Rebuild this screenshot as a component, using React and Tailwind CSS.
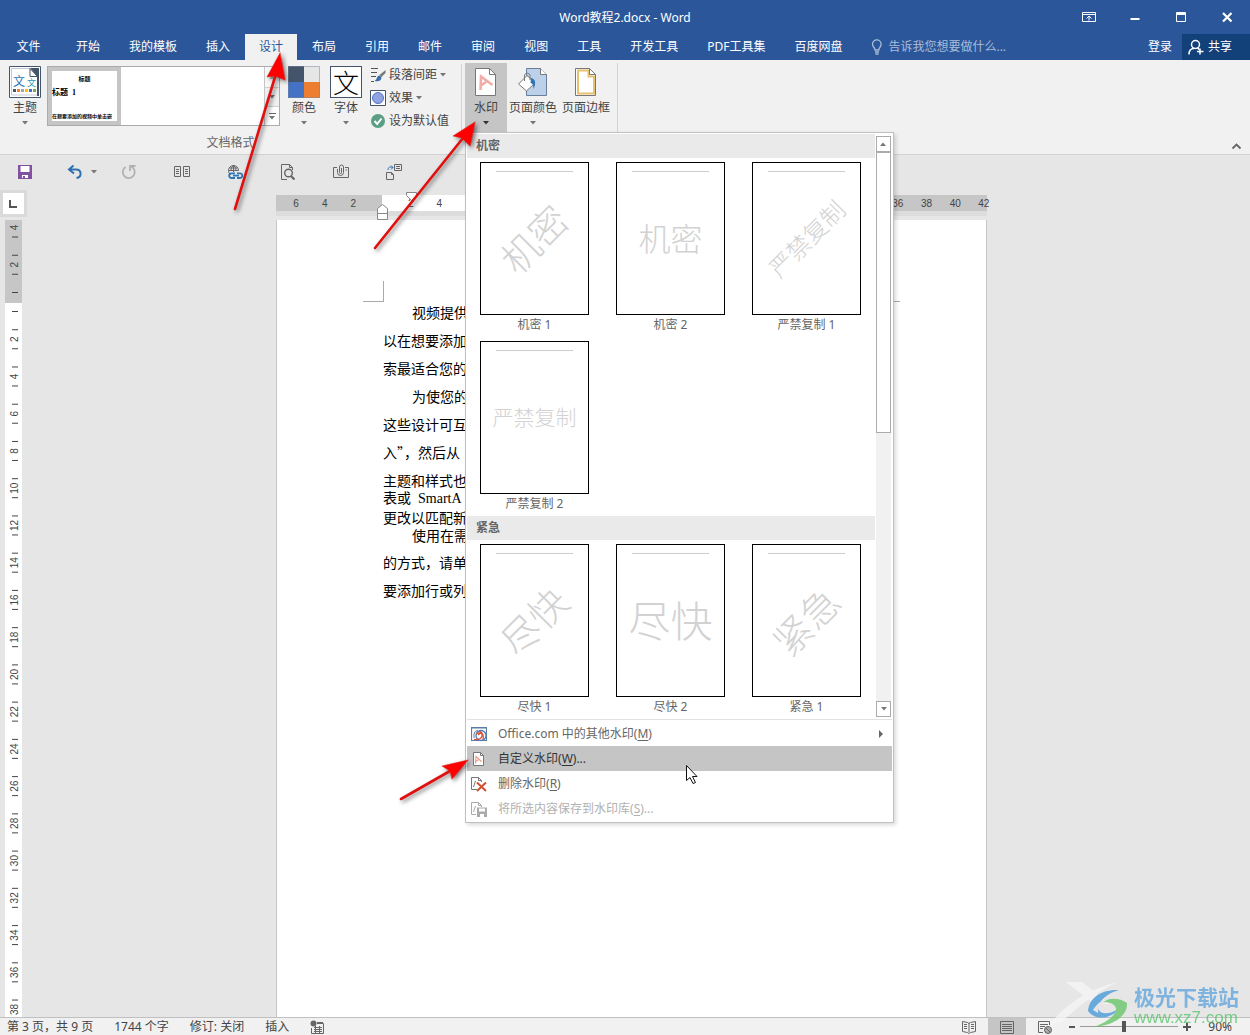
import { useState } from 'react';

const TABS = [
  '开始', '我的模板', '插入', '设计', '布局', '引用', '邮件',
  '审阅', '视图', '工具', '开发工具', 'PDF工具集', '百度网盘',
];

const WATERMARKS = [
  {
    title: '机密',
    items: [
      { name: '机密 1', text: '机密', look: '-rotate-45 text-[38px]' },
      { name: '机密 2', text: '机密', look: 'text-[32px]' },
      { name: '严禁复制 1', text: '严禁复制', look: '-rotate-45 text-[24px]' },
      { name: '严禁复制 2', text: '严禁复制', look: 'text-[21px]' },
    ],
  },
  {
    title: '紧急',
    items: [
      { name: '尽快 1', text: '尽快', look: '-rotate-45 text-[38px]' },
      { name: '尽快 2', text: '尽快', look: 'text-[42px]' },
      { name: '紧急 1', text: '紧急', look: '-rotate-45 text-[38px]' },
    ],
  },
];

const LINES = [
  { text: '视频提供', indent: true },
  { text: '以在想要添加' },
  { text: '索最适合您的' },
  { text: '为使您的', indent: true },
  { text: '这些设计可互' },
  { text: '入”，然后从' },
  { text: '主题和样式也' },
  { text: '表或  SmartA', tight: true, latin: true },
  { text: '更改以匹配新', tight: true },
  { text: '使用在需', indent: true, tight: true },
  { text: '的方式，请单' },
  { text: '要添加行或列' },
];

const range = (from, to) => Array.from({ length: (to - from) / 2 + 1 }, (_, i) => from + i * 2);

export default function App() {
  const [tab, setTab] = useState('设计');
  const [zoom, setZoom] = useState(90);

  return (
    <div className="relative flex flex-col h-screen overflow-hidden bg-[#e6e6e6] text-xs text-[#444] font-['Noto_Sans','Noto_Sans_CJK_SC',sans-serif]">
      <TitleBar />
      <TabBar active={tab} onChange={setTab} />
      <Ribbon />
      <QuickAccess />
      <Workspace />
      <StatusBar zoom={zoom} onZoom={setZoom} />
      <SiteMark />
      <Arrows />
    </div>
  );
}

function TitleBar() {
  return (
    <header className="relative flex items-center justify-center h-[34px] pt-[2px] shrink-0 bg-[#2b579a] text-white">
      <h1>Word教程2.docx - Word</h1>
      <div className="absolute right-0 top-0 flex h-[33px]">
        <WindowButton label="功能区显示选项">
          <path d="M1.500 3.500h13v9h-13zM1.500 5.500h13M8 11.500V7M5.500 9.500l2.500-2.500 2.500 2.500" />
        </WindowButton>
        <WindowButton label="最小化">
          <path d="M3.500 10h9" strokeWidth="2" />
        </WindowButton>
        <WindowButton label="最大化">
          <path d="M3.500 3.500h9v9h-9zM3.500 4.500h9M3.500 5.500h9" />
        </WindowButton>
        <WindowButton label="关闭">
          <path d="M4 4l8.500 8.500M12.500 4L4 12.500" strokeWidth="2.200" />
        </WindowButton>
      </div>
    </header>
  );
}

function WindowButton({ label, children }) {
  return (
    <button aria-label={label} className="w-[46px] flex items-center justify-center">
      <svg width="16" height="16" fill="none" stroke="#fff">{children}</svg>
    </button>
  );
}

function TabBar({ active, onChange }) {
  return (
    <nav className="flex gap-px h-[26px] shrink-0 bg-[#2b579a] text-white">
      <button className="w-[61px] pr-1">文件</button>
      {TABS.map((t) => (
        <button
          key={t}
          onClick={() => onChange(t)}
          className={t === active ? 'px-[14px] bg-[#f1f1f1] text-[#2b579a] whitespace-nowrap' : 'px-[14px] whitespace-nowrap'}
        >
          {t}
        </button>
      ))}
      <label className="flex items-center flex-1 min-w-0 pl-[14px] gap-[5px]">
        <svg width="12" height="16" fill="none" stroke="#a9bcdb" strokeWidth="1.300" className="shrink-0">
          <path d="M4 11C4 8.500 1.500 8 1.500 5.200a4.300 4.300 0 0 1 8.600 0C10.100 8 7.800 8.500 7.800 11zM4 13h4M4.500 15h3" />
        </svg>
        <input
          aria-label="操作说明搜索"
          placeholder="告诉我您想要做什么..."
          className="w-full bg-transparent outline-none placeholder:text-[#a9bcdb]"
        />
      </label>
      <button className="px-[9px] shrink-0">登录</button>
      <button className="flex items-center gap-1 w-[68px] pl-[6px] shrink-0 bg-[#124078]">
        <svg width="16" height="16" fill="none" stroke="#fff" strokeWidth="1.500">
          <circle cx="7.500" cy="5.500" r="4" />
          <path d="M1 15.500c0-4 2-6 5-6M9.500 8.500l1.500 2M12 9.500v6M9 12.500h6.500" />
        </svg>
        共享
      </button>
    </nav>
  );
}

function Caret({ dark }) {
  return (
    <svg width="6" height="4" fill={dark ? '#333' : '#777'} className="shrink-0">
      <path d="M0 0h6L3 3.500z" />
    </svg>
  );
}

function BigButton({ label, arrow, children }) {
  return (
    <button className="flex flex-col items-center shrink-0">
      {children}
      <span className="leading-5 whitespace-nowrap">{label}</span>
      {arrow && <span className="mt-[3px]"><Caret /></span>}
    </button>
  );
}

function Ribbon() {
  return (
    <section className="relative flex h-[95px] shrink-0 bg-[#f1f1f1] border-b border-[#d2d2d2]">
      <div className="flex flex-col w-[461px] shrink-0">
        <div className="flex items-start h-[73px] pt-[6px] pl-[9px]">
          <BigButton label="主题" arrow>
            <ThemeIcon />
          </BigButton>
          <div className="flex w-[233px] h-[60px] ml-[6px] bg-white border border-[#ababab]">
            <button className="flex flex-col items-start w-[73px] h-[58px] shrink-0 border-4 border-[#c5c5c5] bg-white text-black font-['Liberation_Serif','Noto_Sans_CJK_SC',serif]">
              <span className="w-full text-center text-[6px] leading-[16px] font-bold">标题</span>
              <span className="text-[8px] leading-3 font-bold">标题&nbsp; 1</span>
              <span className="mt-[14px] text-[5px] leading-[8px] whitespace-nowrap font-bold">在想要添加的视频中单击嵌</span>
            </button>
            <div className="flex flex-col w-[15px] ml-auto shrink-0 border-l border-[#c6c6c6]">
              <button aria-label="上一行" className="flex items-center justify-center h-5 bg-[#f1f1f1] rotate-180 opacity-50"><Caret /></button>
              <button aria-label="下一行" className="flex items-center justify-center h-5 bg-[#f1f1f1] border-y border-[#d2d2d2]"><Caret /></button>
              <button aria-label="其他" className="flex flex-col items-center justify-center gap-[2px] flex-1">
                <span className="w-[7px] h-px bg-[#666]" />
                <Caret />
              </button>
            </div>
          </div>
          <div className="flex gap-[10px] ml-2">
            <BigButton label="颜色" arrow>
              <svg width="32" height="32">
                <path d="M0 0h16v16H0z" fill="#44546a" />
                <path d="M16 0h16v16H16z" fill="#e7e6e6" />
                <path d="M0 16h16v16H0z" fill="#4472c4" />
                <path d="M16 16h16v16H16z" fill="#ed7d31" />
                <path d="M.5.5h31v31H.5z" fill="none" stroke="#7a8799" strokeOpacity=".5" />
              </svg>
            </BigButton>
            <BigButton label="字体" arrow>
              <span className="w-8 h-8 border border-[#44546a] bg-white text-black text-[26px] leading-[32px] font-light">文</span>
            </BigButton>
          </div>
          <div className="flex flex-col ml-2 -mt-[3px]">
            <SmallButton label="段落间距" arrow>
              <path d="M1 1.500h7M1 5.500h6M1 9.500h5M1 14.500h3" stroke="#555" />
              <path d="M15.500 3L9.500 8l2 2L15.500 6z" fill="#777" />
              <path d="M9.500 8.500c-3 0-2 4-5 5.500 4 1 7 0 7-4z" fill="#3a6ea5" />
            </SmallButton>
            <SmallButton label="效果" arrow>
              <path d="M.5.500h15v15H.5z" fill="#fff" stroke="#44546a" />
              <circle cx="8" cy="8" r="5.500" fill="#8fa3e0" stroke="#5873c4" />
            </SmallButton>
            <SmallButton label="设为默认值">
              <circle cx="8" cy="8" r="7" fill="#5a9e84" />
              <path d="M4.500 8l2.700 3L11.500 5.500" fill="none" stroke="#fff" strokeWidth="2" />
            </SmallButton>
          </div>
        </div>
        <span className="text-center leading-[22px] text-[#666]">文档格式</span>
      </div>
      <div className="w-px h-[68px] mt-1 bg-[#d2d2d2]" />
      <div className="flex mt-[3px] h-[69px] pl-[3px] pr-[7px] border-r border-[#d2d2d2]">
        <div className="relative">
          <button className="flex flex-col items-center w-[42px] h-[69px] pt-[3px] bg-[#c5c5c5]">
            <PageIcon>
              <path d="M10.500 24L11 10.500l11.500 8.500M11 19.500l7-5" fill="none" stroke="#f2aea6" strokeWidth="2.600" />
            </PageIcon>
            <span className="leading-5">水印</span>
            <span className="mt-[3px]"><Caret dark /></span>
          </button>
          <WatermarkMenu />
        </div>
        <div className="flex gap-[5px] ml-[2px] pt-[3px]">
          <BigButton label="页面颜色" arrow>
            <svg width="32" height="32" fill="none" stroke="#777">
              <path d="M9.500 2.500h14l6 6v21h-20z" fill="#bdd0ea" stroke="#6a7f9c" />
              <path d="M23.500 2.500v6h6" fill="#fff" />
              <path d="M1.500 18L10 9.500l8 7.500-8.500 8z" fill="#fff" />
              <path d="M7.500 15V9a3 3 0 0 1 5.500 0v5" />
              <path d="M14 12c5 1 5 6 2.500 11 0-4-1-6-3-6z" fill="#2e75b6" stroke="none" />
            </svg>
          </BigButton>
          <BigButton label="页面边框">
            <PageIcon><path d="M8 4.500h10.500v6H24v17H8z" fill="none" stroke="#e8c170" strokeWidth="2" /></PageIcon>
          </BigButton>
        </div>
      </div>
      <button aria-label="折叠功能区" className="self-end ml-auto mr-2 mb-1">
        <svg width="11" height="8" fill="none" stroke="#666" strokeWidth="1.800"><path d="M1.500 6.500l4-4 4 4" /></svg>
      </button>
    </section>
  );
}

function SmallButton({ label, arrow, children }) {
  return (
    <button className="flex items-center gap-[3px] h-[23px] whitespace-nowrap">
      <svg width="16" height="16" className="shrink-0">{children}</svg>
      {label}
      {arrow && <Caret />}
    </button>
  );
}

function ThemeIcon() {
  return (
    <span className="relative block w-8 h-8">
      <svg width="32" height="32">
        <path d="M.5.500h31v31H.5z" fill="#fff" stroke="#44546a" />
        <path d="M2.500 2.500h18l8 8v18.500h-26z" fill="#fff" stroke="#c3c9d2" />
        <path d="M21 2h9v28H28V10z" fill="#44546a" />
        <path d="M21 2.500v8h7.500z" fill="#fff" stroke="#44546a" />
        <path d="M4 23h3v3H4z" fill="#44546a" />
        <path d="M8 23h3v3H8z" fill="#ed7d31" />
        <path d="M12 23h3v3h-3z" fill="#a5a5a5" />
        <path d="M16 23h3v3h-3z" fill="#ffc000" />
        <path d="M20 23h3v3h-3z" fill="#4472c4" />
        <path d="M24 23h3v3h-3z" fill="#70ad47" />
      </svg>
      <span className="absolute left-1 top-[10px] text-[12px] leading-[12px] text-[#2e75b6]">文</span>
      <span className="absolute left-[18px] top-3 text-[9px] leading-[10px] text-[#2e9ab6]">文</span>
    </span>
  );
}

function PageIcon({ children }) {
  return (
    <svg width="32" height="32">
      <path d="M5.500 2.500h14l6 6v21h-20z" fill="#fff" stroke="#777" />
      {children}
      <path d="M19.500 2.500v6h6z" fill="#fff" stroke="#777" />
    </svg>
  );
}

function WatermarkMenu() {
  return (
    <div className="absolute left-0 top-full z-10 w-[429px] p-px bg-white border border-[#c0c0c0] shadow-[2px_2px_4px_rgba(0,0,0,0.15)]">
      <div className="flex justify-between h-[586px] pr-px border-b border-[#e1e1e1]">
        <div className="w-[408px]">
          {WATERMARKS.map((section) => (
            <section key={section.title}>
              <h2 className="h-6 pl-[9px] leading-[23px] bg-[#eaeaea] font-bold text-[#666]">{section.title}</h2>
              <div className="flex flex-wrap gap-x-[27px] gap-y-1 pt-1 pl-[13px]">
                {section.items.map((item) => (
                  <button key={item.name} className="flex flex-col items-center h-[175px]">
                    <span className="relative flex items-center justify-center w-[109px] h-[153px] border border-black bg-white overflow-hidden">
                      <span className="absolute inset-x-[15px] top-2 h-px bg-[#ccc]" />
                      <span className={`${item.look} font-light leading-none whitespace-nowrap text-[#d2d2d2]`}>{item.text}</span>
                    </span>
                    <span className="leading-[19px] text-[#666]">{item.name}</span>
                  </button>
                ))}
              </div>
            </section>
          ))}
        </div>
        <div className="flex flex-col w-[15px] my-[2px] bg-[#f1f1f1]">
          <button aria-label="向上滚动" className="flex items-center justify-center h-4 shrink-0 bg-white border border-[#ababab] rotate-180"><Caret /></button>
          <div className="h-[281px] bg-white border border-[#ababab]" />
          <button aria-label="向下滚动" className="flex items-center justify-center h-4 mt-auto shrink-0 bg-white border border-[#ababab]"><Caret /></button>
        </div>
      </div>
      <div className="pt-px">
        <MenuItem text="Office.com 中的其他水印" hotkey="M" arrow>
          <path d="M1 2h14M.5 1.500h15v13H.5z" fill="none" stroke="#5b7ca8" strokeWidth="1.200" />
          <path d="M3 12V8a4 4 0 0 1 4-3.500" fill="none" stroke="#5b7ca8" />
          <circle cx="10" cy="9.500" r="5" fill="#fff" stroke="#4a7cc0" strokeWidth="1.300" />
          <path d="M5 8c3-2 7-1 6 2s-4 4-8 3.500M8 5c3 1 5 4 4 9M7 9l4-3" fill="none" stroke="#d9503a" strokeWidth="1.300" />
        </MenuItem>
        <MenuItem text="自定义水印" hotkey="W" dots active>
          <path d="M2.500 1.500h7l3 3v10h-10z" fill="#fff" stroke="#777" />
          <path d="M9.500 1.500v3h3" fill="none" stroke="#777" />
          <path d="M4.500 12.500l.500-7 5.500 5M4.500 10.500L8 8.500" fill="none" stroke="#f09a8c" strokeWidth="1.200" />
        </MenuItem>
        <MenuItem text="删除水印" hotkey="R">
          <path d="M6 13.500H.500v-12h7l3 3V6M7.500 1.500v3h3M2.500 11l2-6" fill="none" stroke="#777" />
          <path d="M6 6.500l9 8.500M15 6.500L6 15" stroke="#cf5230" strokeWidth="2" />
        </MenuItem>
        <MenuItem text="将所选内容保存到水印库" hotkey="S" dots disabled>
          <path d="M5 13.500H.500v-12h7l3 3V6M7.500 1.500v3h3M2.500 11l2-6" fill="none" stroke="#aaa" />
          <path d="M6 6.500h10V16H6z" fill="#aaa" />
          <path d="M8 7.500h6v3H8zM9 13h4v3H9z" fill="#fff" />
        </MenuItem>
      </div>
    </div>
  );
}

function MenuItem({ text, hotkey, arrow, dots, active, disabled, children }) {
  let tone = 'text-[#666]';
  if (active) tone = 'bg-[#c5c5c5] text-[#333]';
  if (disabled) tone = 'text-[#b1b1b1]';
  return (
    <button disabled={disabled} className={`${tone} flex items-center w-full h-[25px] pl-1 pr-[9px] text-left`}>
      <svg width="16" height="16" className="mr-[11px] shrink-0">{children}</svg>
      <span>{text}(<u className="underline-offset-2">{hotkey}</u>){dots && '...'}</span>
      {arrow && <svg width="4" height="8" fill="#666" className="ml-auto"><path d="M0 0l4 4-4 4z" /></svg>}
    </button>
  );
}

function QuickAccess() {
  return (
    <div className="flex h-[35px] pb-[2px] shrink-0">
      <button aria-label="保存" className="flex items-center justify-center w-[50px]">
        <svg width="16" height="16">
          <path d="M1 1h14v14H1z" fill="#8052a0" />
          <path d="M3.500 2h9v6h-9zM5 11h6v3H5z" fill="#fff" />
          <path d="M6 12h2v2H6z" fill="#8052a0" />
        </svg>
      </button>
      <button aria-label="撤消" className="flex items-center w-[52px] pl-[17px] gap-2">
        <svg width="16" height="16" fill="none" stroke="#2f6fb0" strokeWidth="2">
          <path d="M6.500 1.500L2 5.500l5 4M2.500 5.500H9c6 0 6 8 .5 8.500" />
        </svg>
        <Caret />
      </button>
      <QuickButton label="重复">
        <path d="M10 2.500A6 6 0 1 1 4.500 3M9 7V2h5.500" stroke="#b1b1b1" strokeWidth="1.800" />
      </QuickButton>
      <QuickButton label="并排查看">
        <path d="M.5 2.500h6v10h-6zM9.500 2.500h6v10h-6zM2 5.500h3M2 7.500h3M2 9.500h3M11 5.500h3M11 7.500h3M11 9.500h3" />
      </QuickButton>
      <QuickButton label="超链接">
        <path d="M1.500 6.500a5 5 0 1 1 10 0M1.500 6.500c0 2 1 3.500 2.500 4M6.500 1v7M1.500 6.500h10M4 7c0-3 1-5 2.500-5.500C8 2 9 4 9 7M2.500 4h8" />
        <path d="M8 14H4.500a2.300 2.300 0 0 1 0-4.600H8M10 9.400h3a2.300 2.300 0 0 1 0 4.600h-3M6 11.700h6" stroke="#2e75b6" strokeWidth="1.800" />
      </QuickButton>
      <QuickButton label="打印预览">
        <path d="M7 15.500H1.500v-15h8l3 3V6M9.500.500v3h3" />
        <circle cx="8.500" cy="9" r="3.800" fill="#e6e6e6" strokeWidth="1.400" />
        <path d="M11 12l3.500 3.500" strokeWidth="2.200" />
      </QuickButton>
      <QuickButton label="附加文件">
        <path d="M4 3.500H.5v10h15v-10H12M12.500 6h1.500" />
        <path d="M4.500 5v3.500a3 3 0 0 0 6 0V3a2 2 0 0 0-4 0v5.500a1 1 0 0 0 2 0V4" />
      </QuickButton>
      <QuickButton label="切换窗口">
        <path d="M8.500.500h7v6h-7zM10 2.500h4M10 4.500h4M.5 8.500h5l2 2v5h-7zM5.500 8.500v2h2" />
        <path d="M2 6c0-3 2-3.500 5-2.500M5 1.500l2 2-2 2" stroke="#2e75b6" />
      </QuickButton>
    </div>
  );
}

function QuickButton({ label, children }) {
  return (
    <button aria-label={label} className="flex items-center justify-center w-[53px]">
      <svg width="16" height="16" fill="none" stroke="#666">{children}</svg>
    </button>
  );
}

function Workspace() {
  return (
    <main className="flex flex-1 min-h-0">
      <div className="flex flex-col w-[23px] shrink-0">
        <button aria-label="制表符" className="flex items-center justify-center w-[27px] h-[27px] mb-[3px] shrink-0 border-[3px] border-[#dadada] bg-white">
          <svg width="9" height="8" fill="none" stroke="#555" strokeWidth="2"><path d="M1 0v7h7" /></svg>
        </button>
        <VerticalRuler />
      </div>
      <div className="flex flex-col items-center flex-1 min-w-0 pr-[10px]">
        <HorizontalRuler />
        <article className="w-[711px] flex-1 min-h-0 overflow-hidden bg-white border-x border-[#c6c6c6] text-black">
          <div className="flex justify-between pt-[61px] px-[86px]">
            <span className="w-[21px] h-[21px] border-r border-b border-[#aaa]" />
            <span className="w-[21px] h-[21px] border-l border-b border-[#aaa]" />
          </div>
          <div className="-mt-2 pl-[106px] text-sm">
            {LINES.map((line) => (
              <p
                key={line.text}
                lang="zh-CN"
                className={`${line.indent ? 'pl-[29px]' : ''} ${line.tight ? 'leading-[18px]' : 'pt-[9px] leading-[19px]'} ${line.latin ? "font-['Liberation_Serif','Noto_Sans_CJK_SC',serif]" : "font-['Noto_Sans_CJK_SC',sans-serif]"} whitespace-pre`}
              >
                {line.text}
              </p>
            ))}
          </div>
        </article>
      </div>
    </main>
  );
}

// One character is 14.33 wide, and the open gallery covers 6 to 34.
function HorizontalRuler() {
  const x = (n) => 106 + n * 14.33;
  return (
    <svg width="711" height="30" className="shrink-0 overflow-visible" fontFamily="Liberation Sans" fontSize="10" textAnchor="middle" fill="#444">
      <path d="M0 5h711v16H0z" fill="#c6c6c6" />
      <path d="M106 5h498v16H106z" fill="#fff" />
      <path d="M0 21h711v5H0z" fill="#dcdcdc" />
      {range(2, 6).map((n) => <text key={n} x={x(-n)} y="17">{n}</text>)}
      {[2, 4, ...range(36, 42)].map((n) => <text key={n} x={x(n)} y="17">{n}</text>)}
      <path d="M130.500 2.500h10v3l-5 5-5-5z" fill="#fff" stroke="#888" />
      <path d="M101.500 19.500v-1l5-4 5 4v11h-10v-10M101.500 23.500h10" fill="#fff" stroke="#888" />
    </svg>
  );
}

function VerticalRuler() {
  const y = (n) => 82 + n * 18.62;
  return (
    <svg width="17" height="100%" className="flex-1 min-h-0 ml-[5px] bg-white" fontFamily="Liberation Sans" fontSize="10" textAnchor="middle" fill="#444">
      <path d="M0 0h17v83H0z" fill="#c6c6c6" />
      {range(-4, 38).map((n) => (
        <g key={n} transform={`translate(10 ${y(n)})`}>
          {n !== 0 && <text transform="rotate(-90)" y="3">{Math.abs(n)}</text>}
          <path d="M-3 -9.500h6M-3 9.500h6" stroke="#444" />
        </g>
      ))}
    </svg>
  );
}

function StatusBar({ zoom, onZoom }) {
  return (
    <footer className="flex items-center h-[18px] shrink-0 pl-[7px] border-t border-[#c0c0c0] bg-[#f1f1f1] whitespace-nowrap">
      <div className="flex items-center gap-[21px]">
        <span>第 3 页，共 9 页</span>
        <span>1744 个字</span>
        <span>修订: 关闭</span>
        <span>插入</span>
        <svg width="14" height="14" fill="none" stroke="#666">
          <circle cx="3.500" cy="3.500" r="3" fill="#666" stroke="none" />
          <path d="M7 3.500h6.500v10h-12V8M7 2.500h6M4 7.500h8M4 9.500h8M4 11.500h8M5.500 6v7M9.500 6v7" />
        </svg>
      </div>
      <div className="flex items-center ml-auto pr-[18px]">
        <ViewButton label="阅读视图">
          <path d="M1.500 2.500l5 1 1.500 1 1.500-1 5-1v10l-5 1-1.500 1-1.500-1-5-1zM8 4v9M3 5.500h3M3 7.500h3M3 9.500h3M10 5.500h3M10 7.500h3M10 9.500h3" />
        </ViewButton>
        <ViewButton label="页面视图" active>
          <path d="M1.500 2.500h13v12h-13zM3 5.500h10M3 7.500h10M3 9.500h10M3 11.500h10" />
        </ViewButton>
        <ViewButton label="Web 版式视图">
          <path d="M6 13.500H1.500v-11h11V6M3 5.500h8M3 7.500h5M3 9.500h3" />
          <circle cx="11" cy="11" r="3.500" fill="#aaa" />
          <path d="M9 9l4 4" />
        </ViewButton>
        <button aria-label="缩小" className="w-4 h-[2px] border-x-[5px] border-[#f1f1f1] bg-[#555]" onClick={() => onZoom(zoom - 10)} />
        <input
          type="range"
          min="10"
          max="190"
          aria-label="显示比例"
          value={zoom}
          onChange={(e) => onZoom(Number(e.target.value))}
          className="w-[98px] h-px mr-1 appearance-none bg-[#999] [&::-webkit-slider-thumb]:appearance-none [&::-webkit-slider-thumb]:w-1 [&::-webkit-slider-thumb]:h-[11px] [&::-webkit-slider-thumb]:bg-[#555]"
        />
        <button aria-label="放大" className="mr-4" onClick={() => onZoom(zoom + 10)}>
          <svg width="10" height="10" stroke="#555" strokeWidth="2"><path d="M1 5h8M5 1v8" /></svg>
        </button>
        <span>{zoom}%</span>
      </div>
    </footer>
  );
}

function ViewButton({ label, active, children }) {
  return (
    <button aria-label={label} className={`${active ? 'bg-[#c5c5c5]' : ''} flex items-center justify-center w-[38px] h-[17px]`}>
      <svg width="16" height="16" fill="none" stroke="#666">{children}</svg>
    </button>
  );
}

function SiteMark() {
  return (
    <div className="absolute right-[11px] bottom-[3px] flex items-center gap-1 opacity-75 pointer-events-none">
      <svg width="86" height="50" className="-mr-1">
        <path d="M2 42C18 22 42 6 70 0 48 10 28 26 14 40zM18 0h16l28 22H46z" fill="#f7f7f7" />
        <path d="M71 8C53 7 41 16 40 29c7 10 24 8 30-2-7 5-17 6-19 1-2-7 6-16 20-20z" fill="#3f97d8" />
        <path d="M52 21c9-6 20-5 27 0 1 11-10 22-33 24 13-5 23-12 22-19-2-5-9-7-16-5z" fill="#62c462" />
        <path d="M45 28c4-7 12-12 19-13-8 4-14 9-14 16z" fill="#e6e6e6" />
      </svg>
      <div className="whitespace-nowrap">
        <p className="text-[21px] leading-[22px] font-bold text-[#5ba3dc]">极光下载站</p>
        <p className="text-[17px] leading-[20px] text-[#52c266] font-['Liberation_Sans',sans-serif]">www.xz7.com</p>
      </div>
    </div>
  );
}

// Callout arrows and the mouse pointer, drawn over the whole window.
function Arrows() {
  return (
    <svg className="absolute inset-0 z-20 w-full h-full pointer-events-none">
      <g fill="#f00" stroke="#e01010" strokeLinecap="round" className="drop-shadow-[2px_2px_2px_rgba(0,0,0,0.5)]">
        <path d="M235 209L275 77M375 248L463 138M401 799L450 771" strokeWidth="2.600" />
        <path d="M280 53l-13 24 8-1 10 4zM475 122l-22 14 9 2 8 8zM468 760l-26 6 8 5 2 8z" strokeWidth=".5" />
      </g>
      <path d="M686.500 765.500v15l3.500-3 3 6 2.500-1-3-6h4.500z" fill="#fff" stroke="#111" />
    </svg>
  );
}
